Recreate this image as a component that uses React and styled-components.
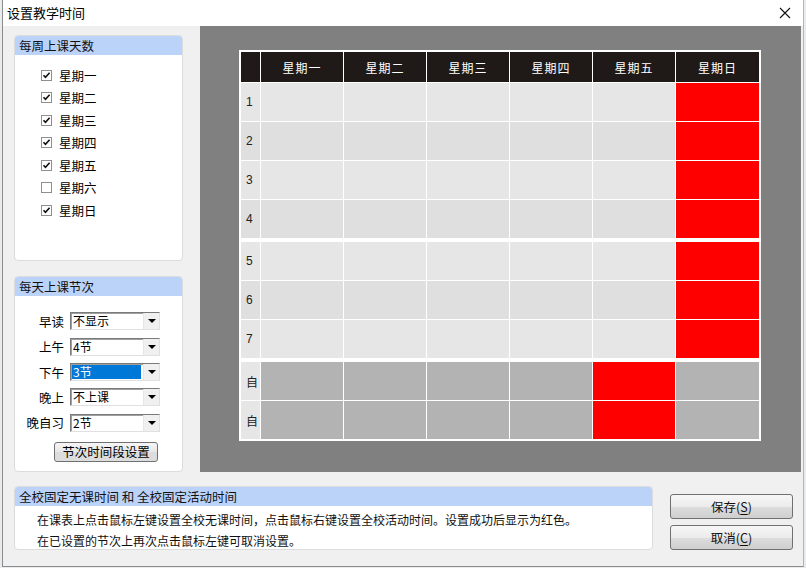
import React from "react";
import styled, { createGlobalStyle } from "styled-components";

const GlobalStyle = createGlobalStyle`
  html, body {
    margin: 0;
    padding: 0;
    background: #e9ecef;
  }
  body {
    font-family: "Noto Sans CJK SC", "Liberation Sans", sans-serif;
    font-size: 12px;
    color: #000;
  }
`;

const Window = styled.div`
  width: 800px;
  height: 566px;
  margin-left: 2px;
  border-left: 1px solid #8c8c8c;
  border-bottom: 1px solid #8c8c8c;
  border-right: 1px solid #b5b5b5;
  background: #f0f0f0;
  display: flex;
  flex-direction: column;
  overflow: hidden;
`;

const TitleBar = styled.div`
  height: 26px;
  background: #fff;
  display: flex;
  align-items: center;
  justify-content: space-between;
  padding: 0 10px 0 4px;
  flex-shrink: 0;
`;

const Title = styled.span`
  font-size: 13px;
  line-height: 26px;
`;

const Close = styled.span`
  width: 16px;
  height: 16px;
  display: flex;
  align-items: center;
  justify-content: center;
`;

const Top = styled.div`
  display: flex;
  height: 446px;
  flex-shrink: 0;
`;

const LeftCol = styled.div`
  width: 169px;
  padding: 9px 17px 0 11px;
  display: flex;
  flex-direction: column;
  gap: 15px;
`;

const Group = styled.div`
  background: #fff;
  border: 1px solid #dcdcdc;
  border-radius: 4px;
  height: ${(p) => p.h}px;
  box-sizing: border-box;
  overflow: hidden;
  display: flex;
  flex-direction: column;
`;

const GroupHead = styled.div`
  background: #bcd3f9;
  height: 19px;
  line-height: 19px;
  padding-left: 4px;
  font-size: 12.5px;
  color: #111;
  flex-shrink: 0;
`;

const CheckList = styled.div`
  display: flex;
  flex-direction: column;
  padding: 12px 0 0 26px;
  gap: 6.6px;
`;

const CheckRow = styled.label`
  display: flex;
  align-items: center;
  gap: 7px;
  height: 16px;
  font-size: 12.5px;
`;

const Box = styled.span`
  width: 9px;
  height: 9px;
  border: 1px solid #8f8f8f;
  background: #fff;
  display: flex;
  align-items: center;
  justify-content: center;
`;

const Check = ({ on }) => (
  <Box>
    {on && (
      <svg width="9" height="9" viewBox="0 0 9 9">
        <path d="M1.5 4.2 L3.5 6.4 L7.6 1.8" fill="none" stroke="#111" strokeWidth="1.6" />
      </svg>
    )}
  </Box>
);

const SelectList = styled.div`
  display: flex;
  flex-direction: column;
  padding: 16px 0 0 0;
  gap: 7.3px;
`;

const SelectRow = styled.div`
  display: flex;
  align-items: center;
  height: 18px;
`;

const SelectLabel = styled.span`
  width: 49px;
  text-align: right;
  padding-right: 6px;
  font-size: 12.5px;
`;

const Select = styled.div`
  width: 90px;
  height: 18px;
  box-sizing: border-box;
  border: 1px solid;
  border-color: #7a7a7a #e0e0e0 #e0e0e0 #7a7a7a;
  box-shadow: inset 1px 1px 0 #a0a0a0;
  display: flex;
  background: #fff;
`;

const SelectValue = styled.span`
  flex: 1;
  margin: 1px 2px 1px 1px;
  padding-left: 1px;
  line-height: 14px;
  font-size: 12px;
  background: ${(p) => (p.active ? "#0078d7" : "transparent")};
  color: ${(p) => (p.active ? "#fff" : "#000")};
`;

const Arrow = styled.span`
  width: 15px;
  background: #f0f0f0;
  border-left: 1px solid #e6e6e6;
  display: flex;
  align-items: center;
  justify-content: center;
  &::after {
    content: "";
    border-left: 4px solid transparent;
    border-right: 4px solid transparent;
    border-top: 4px solid #000;
  }
`;

const SmallButton = styled.div`
  margin: 10px 0 0 39px;
  width: 104px;
  height: 20px;
  box-sizing: border-box;
  border: 1px solid #707070;
  border-radius: 3px;
  background: linear-gradient(#f6f6f6, #e6e6e6 50%, #dcdcdc 51%, #dddddd);
  display: flex;
  align-items: center;
  justify-content: center;
  font-size: 12.5px;
`;

const Canvas = styled.div`
  flex: 1;
  background: #808080;
  margin-right: 2px;
  padding: 24px 0 0 39px;
`;

const Table = styled.div`
  display: inline-flex;
  flex-direction: column;
  background: #fff;
  border: 2px solid #fff;
  gap: 4px;
`;

const RowGroup = styled.div`
  display: grid;
  grid-template-columns: 19px repeat(5, 82px) 83px;
  gap: 1px;
`;

const HeadCell = styled.div`
  background: #1f1a17;
  color: #fff;
  height: 30px;
  display: flex;
  align-items: center;
  justify-content: center;
  font-size: 12px;
  letter-spacing: 1px;
`;

const RowNum = styled.div`
  background: ${(p) => (p.alt ? "#dfdfdf" : "#e6e6e6")};
  height: 38px;
  display: flex;
  align-items: center;
  padding-left: 5px;
  font-family: "Liberation Sans", "Noto Sans CJK SC", sans-serif;
  font-size: 12px;
  color: #222;
`;

const Cell = styled.div`
  height: 38px;
  background: ${(p) => (p.red ? "#ff0000" : p.dark ? "#b3b3b3" : p.alt ? "#dfdfdf" : "#e6e6e6")};
`;

const Bottom = styled.div`
  display: flex;
  padding: 14px 0 0 11px;
  gap: 17px;
`;

const InfoGroup = styled(Group)`
  width: 639px;
  height: 64px;
`;

const InfoText = styled.div`
  padding: 3px 0 0 22px;
  line-height: 21px;
  font-size: 12px;
  color: #111;
`;

const ButtonCol = styled.div`
  display: flex;
  flex-direction: column;
  gap: 6px;
  padding-top: 8px;
`;

const DlgButton = styled.div`
  width: 123px;
  height: 25px;
  box-sizing: border-box;
  border: 1px solid #707070;
  border-radius: 3px;
  background: linear-gradient(#f7f7f7, #ebebeb 50%, #dddddd 51%, #cfcfcf);
  display: flex;
  align-items: center;
  justify-content: center;
  font-size: 12.5px;
  color: #111;
  & u {
    text-underline-offset: 2px;
  }
`;

const days = ["星期一", "星期二", "星期三", "星期四", "星期五", "星期六", "星期日"];
const checked = [true, true, true, true, true, false, true];
const headers = ["星期一", "星期二", "星期三", "星期四", "星期五", "星期日"];

const selects = [
  { label: "早读", value: "不显示" },
  { label: "上午", value: "4节" },
  { label: "下午", value: "3节", active: true },
  { label: "晚上", value: "不上课" },
  { label: "晚自习", value: "2节" },
];

const groups = [
  { rows: ["1", "2", "3", "4"], red: 5, head: true },
  { rows: ["5", "6", "7"], red: 5 },
  { rows: ["自", "自"], red: 4, dark: true },
];

export default function App() {
  return (
    <>
      <GlobalStyle />
      <Window>
        <TitleBar>
          <Title>设置教学时间</Title>
          <Close>
            <svg width="12" height="12" viewBox="0 0 12 12">
              <path d="M1 1 L11 11 M11 1 L1 11" stroke="#111" strokeWidth="1.1" />
            </svg>
          </Close>
        </TitleBar>
        <Top>
          <LeftCol>
            <Group h={227}>
              <GroupHead>每周上课天数</GroupHead>
              <CheckList>
                {days.map((d, i) => (
                  <CheckRow key={d}>
                    <Check on={checked[i]} />
                    {d}
                  </CheckRow>
                ))}
              </CheckList>
            </Group>
            <Group h={196}>
              <GroupHead>每天上课节次</GroupHead>
              <SelectList>
                {selects.map((s) => (
                  <SelectRow key={s.label}>
                    <SelectLabel>{s.label}</SelectLabel>
                    <Select>
                      <SelectValue active={s.active}>{s.value}</SelectValue>
                      <Arrow />
                    </Select>
                  </SelectRow>
                ))}
              </SelectList>
              <SmallButton>节次时间段设置</SmallButton>
            </Group>
          </LeftCol>
          <Canvas>
            <Table>
              {groups.map((g, gi) => (
                <RowGroup key={gi}>
                  {g.head && (
                    <>
                      <HeadCell />
                      {headers.map((h) => (
                        <HeadCell key={h}>{h}</HeadCell>
                      ))}
                    </>
                  )}
                  {g.rows.map((r, ri) => {
                    const alt = ri % 2 === 1;
                    return (
                      <React.Fragment key={ri}>
                        <RowNum alt={!g.dark && alt}>{r}</RowNum>
                        {headers.map((h, ci) => (
                          <Cell key={h} alt={alt} dark={g.dark} red={ci === g.red} />
                        ))}
                      </React.Fragment>
                    );
                  })}
                </RowGroup>
              ))}
            </Table>
          </Canvas>
        </Top>
        <Bottom>
          <InfoGroup>
            <GroupHead>全校固定无课时间 和 全校固定活动时间</GroupHead>
            <InfoText>
              在课表上点击鼠标左键设置全校无课时间，点击鼠标右键设置全校活动时间。设置成功后显示为红色。
              <br />
              在已设置的节次上再次点击鼠标左键可取消设置。
            </InfoText>
          </InfoGroup>
          <ButtonCol>
            <DlgButton>
              保存(<u>S</u>)
            </DlgButton>
            <DlgButton>
              取消(<u>C</u>)
            </DlgButton>
          </ButtonCol>
        </Bottom>
      </Window>
    </>
  );
}
